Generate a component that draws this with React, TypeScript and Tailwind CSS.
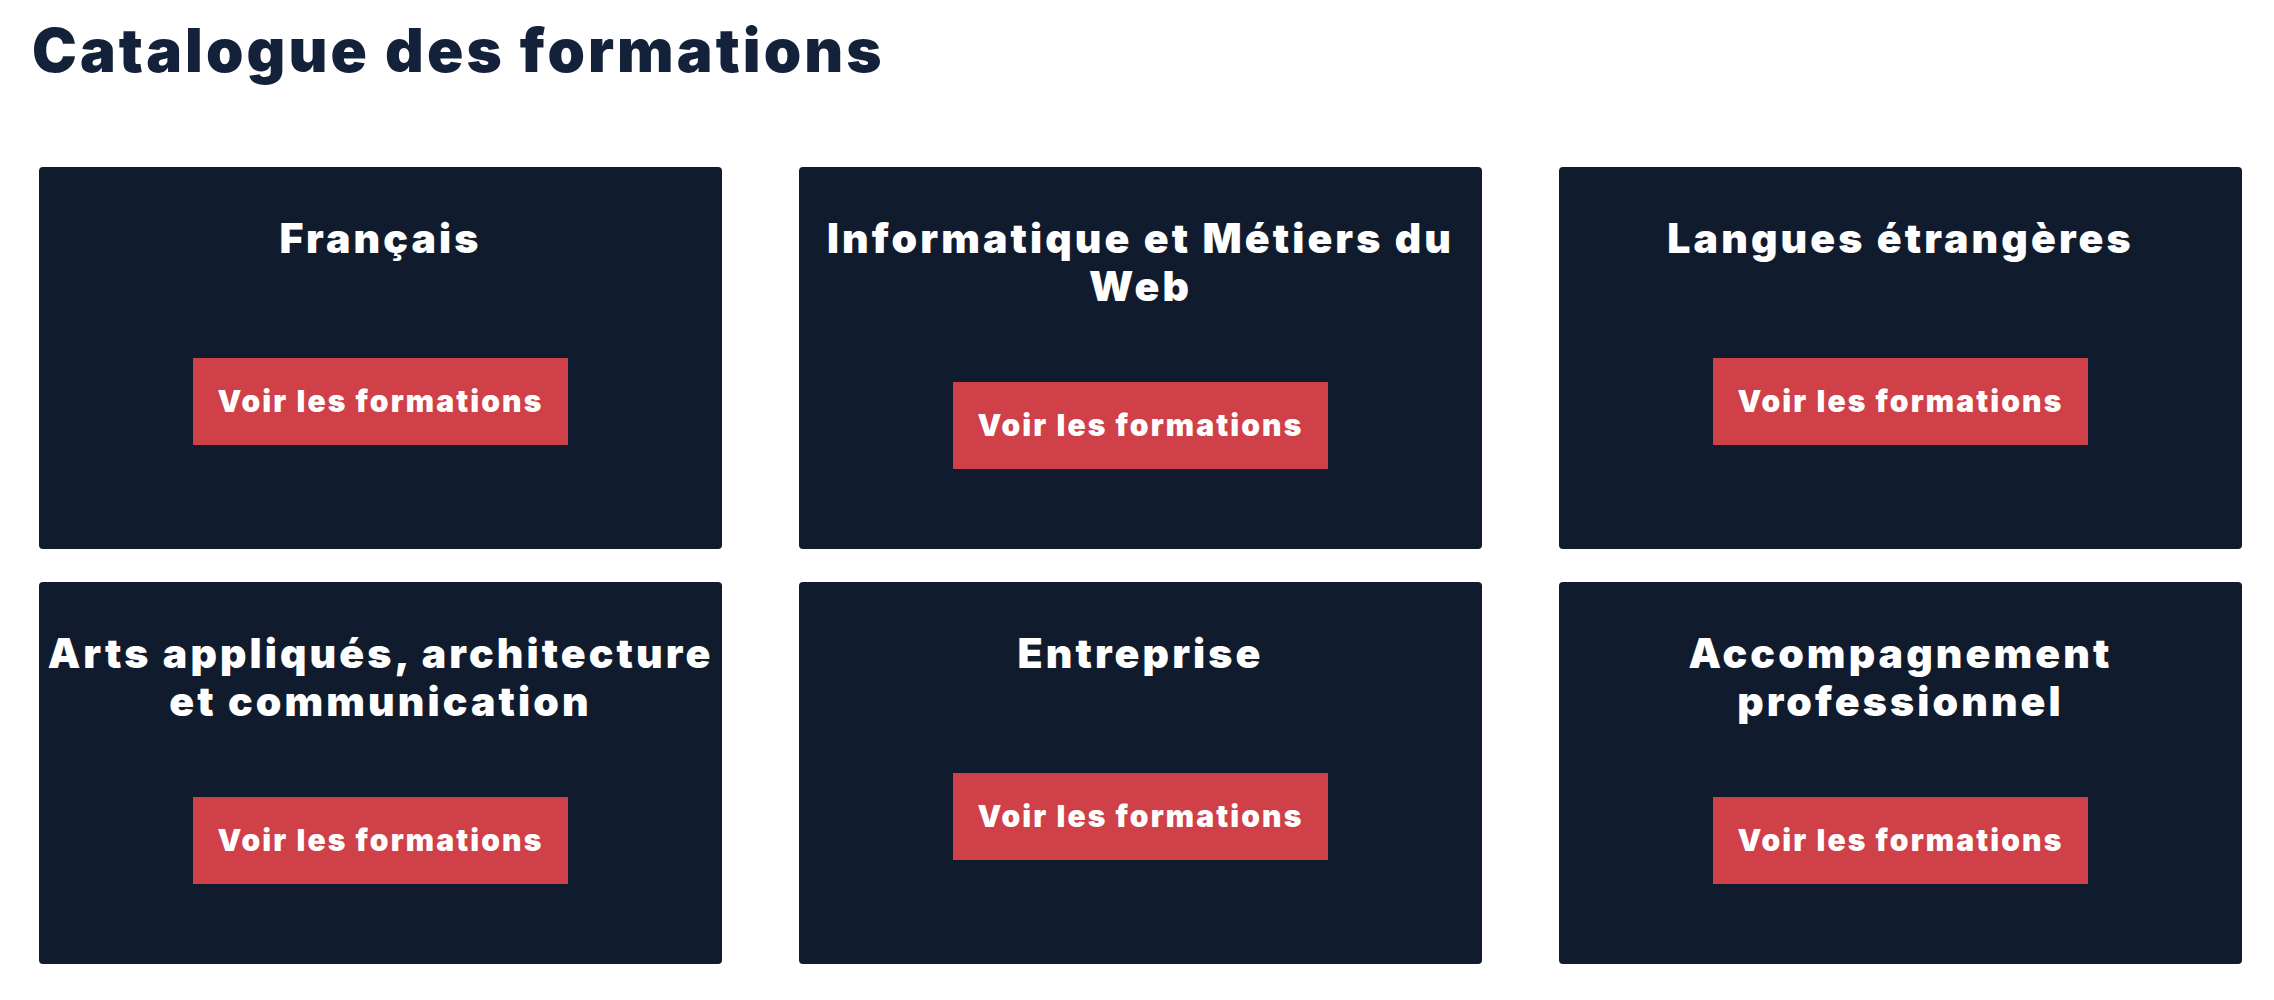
import React from "react";

const items: { lines: string[] }[] = [
  { lines: ["Français"] },
  { lines: ["Informatique et Métiers du", "Web"] },
  { lines: ["Langues étrangères"] },
  { lines: ["Arts appliqués, architecture", "et communication"] },
  { lines: ["Entreprise"] },
  { lines: ["Accompagnement", "professionnel"] },
];

function Card({ lines }: { lines: string[] }) {
  return (
    <div className="flex h-[382px] flex-col items-center rounded-[4px] bg-[#101c2e] px-[8px] pt-[47px] pb-[9px]">
      <h3 className="text-center text-[41px] leading-[48px] font-black tracking-[3.1px] whitespace-nowrap text-white">
        {lines.map((l, i) => (
          <React.Fragment key={i}>
            {i > 0 && <br />}
            {l}
          </React.Fragment>
        ))}
      </h3>
      <div className="flex flex-1 items-center justify-center">
        <a
          href="#"
          className="flex h-[87px] items-center bg-[#d04048] px-[25px] text-[30px] font-black tracking-[2.1px] text-white"
        >
          Voir les formations
        </a>
      </div>
    </div>
  );
}

export default function App() {
  return (
    <div
      className="min-h-screen w-full bg-white px-8"
      style={{ fontFamily: "Inter, 'Noto Sans', sans-serif" }}
    >
      <h1 className="mt-[20px] mb-[87px] text-[60px] leading-[60px] font-black tracking-[3.1px] text-[#13213a]">
        Catalogue des formations
      </h1>
      <div className="ml-[7px] grid grid-cols-3 gap-x-[77px] gap-y-[33px]">
        {items.map((it, i) => (
          <Card key={i} lines={it.lines} />
        ))}
      </div>
    </div>
  );
}
